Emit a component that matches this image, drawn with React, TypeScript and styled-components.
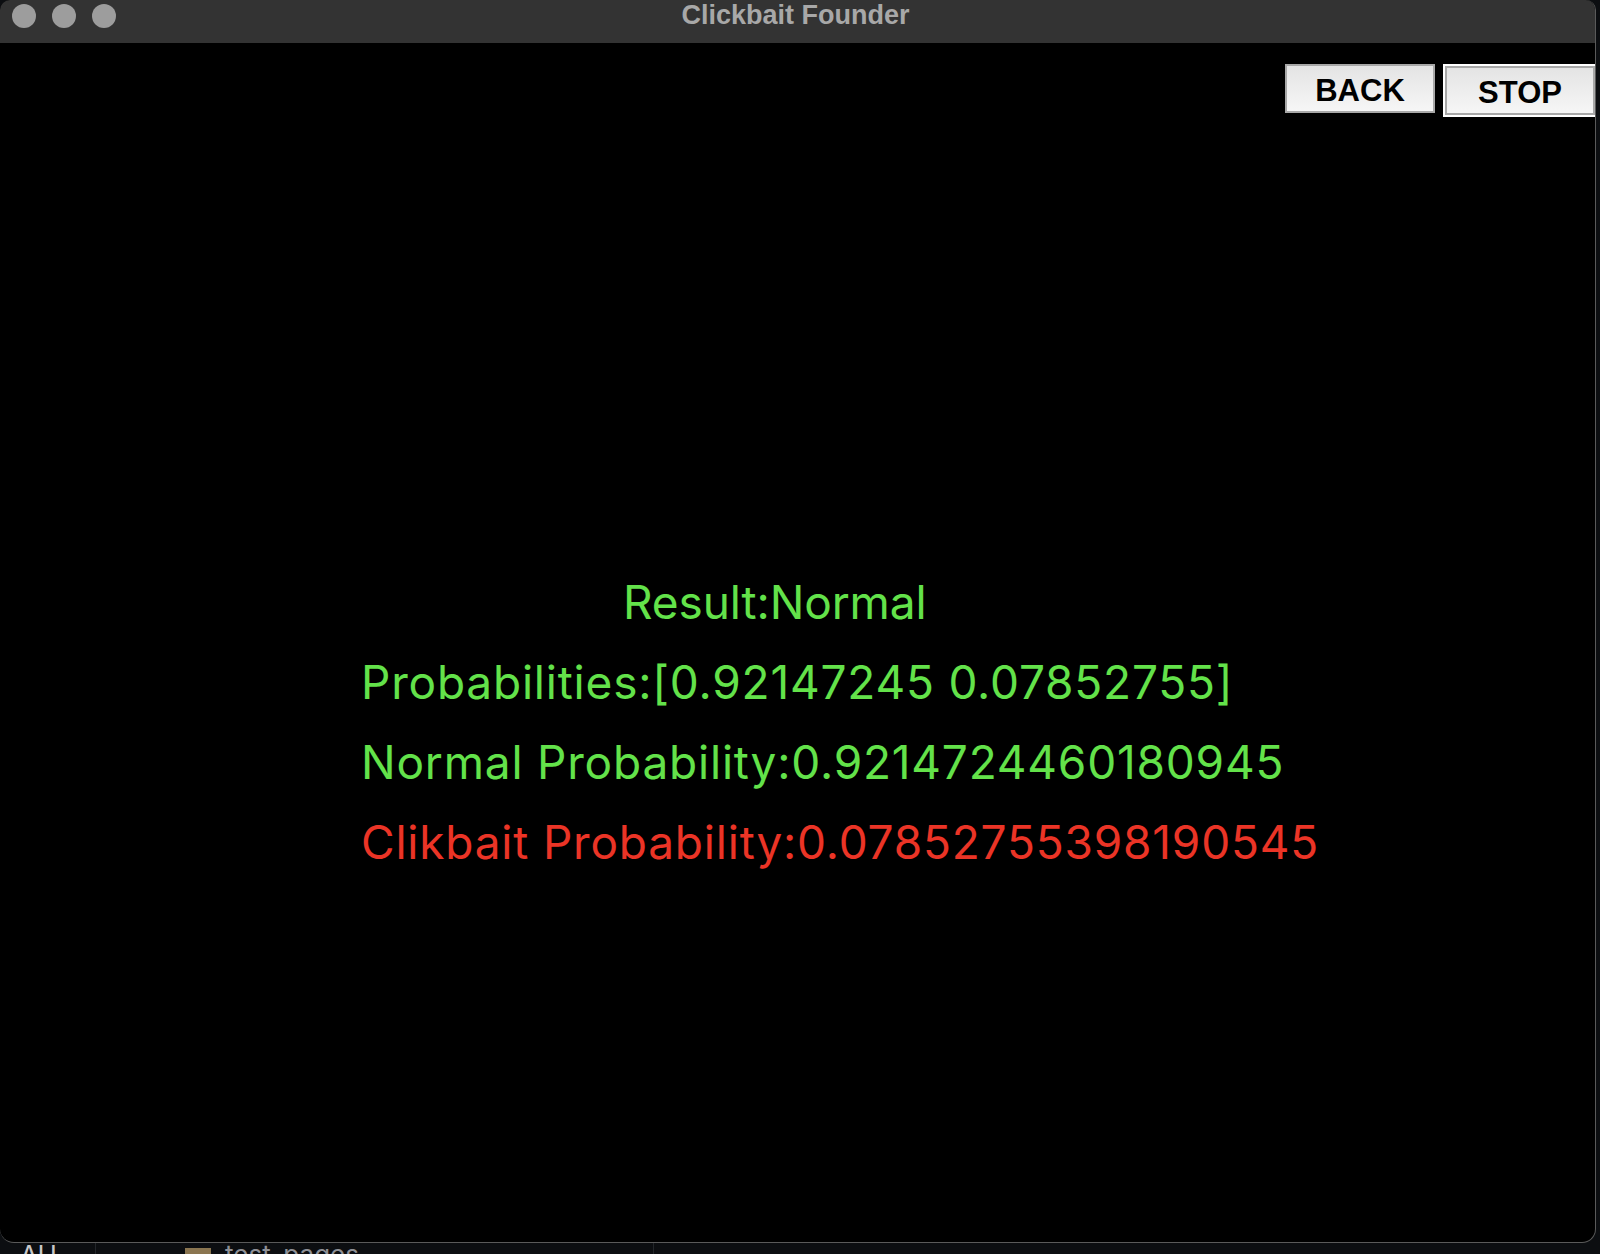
import React from "react";
import styled, { createGlobalStyle } from "styled-components";

const Global = createGlobalStyle`
  html, body { margin: 0; padding: 0; background: #0c0e11; overflow: hidden; }
  #root { width: 1600px; height: 1254px; }
`;

const Screen = styled.div`
  width: 1600px;
  height: 1254px;
  display: flex;
  flex-direction: column;
  overflow: hidden;
  background: #0c0e11;
`;

const Window = styled.div`
  width: 1596px;
  height: 1243px;
  flex: none;
  display: flex;
  flex-direction: column;
  background: #000;
  border-right: 1px solid #5a5a5a;
  border-bottom: 1px solid #5a5a5a;
  border-radius: 10px 10px 14px 14px;
  box-sizing: border-box;
  overflow: hidden;
`;

const TitleBar = styled.div`
  height: 43px;
  flex: none;
  background: #333333;
  display: grid;
  grid-template-columns: 1fr auto 1fr;
  align-items: start;
`;

const Lights = styled.div`
  display: flex;
  gap: 16px;
  padding: 4px 0 0 12px;
`;

const Light = styled.span`
  width: 24px;
  height: 24px;
  border-radius: 50%;
  background: #9d9d9d;
`;

const Title = styled.div`
  font-family: "Liberation Sans", Arial, sans-serif;
  font-weight: 700;
  font-size: 27px;
  line-height: 30px;
  color: #a8a8a8;
  margin-right: 4px;
`;

const Content = styled.div`
  flex: 1;
  display: flex;
  flex-direction: column;
`;

const ButtonRow = styled.div`
  display: flex;
  justify-content: flex-end;
  align-items: flex-start;
  gap: 10px;
  padding-top: 21px;
`;

const Button = styled.button<{ $focused?: boolean }>`
  box-sizing: border-box;
  width: 150px;
  height: 49px;
  margin: ${(p) => (p.$focused ? "2px 0 0 0" : "0")};
  padding: 4px 0 0 0;
  font-family: "Liberation Sans", Arial, sans-serif;
  font-weight: 700;
  font-size: 31px;
  color: #000;
  background: linear-gradient(#e4e4e4, #f6f6f6);
  border: 2px solid #a8a8a8;
  box-shadow: ${(p) => (p.$focused ? "0 0 0 2px #ffffff" : "none")};
  display: flex;
  align-items: center;
  justify-content: center;
  cursor: pointer;
`;

const Results = styled.div`
  margin-top: 447px;
  padding-left: 361px;
  display: flex;
  flex-direction: column;
`;

const Line = styled.div<{ $red?: boolean; $indent?: number; $tight?: boolean }>`
  font-family: Inter, "Noto Sans", sans-serif;
  font-size: 46px;
  line-height: 80px;
  height: 80px;
  letter-spacing: ${(p) => (p.$tight ? "-0.1px" : "0.8px")};
  white-space: nowrap;
  color: ${(p) => (p.$red ? "#eb3426" : "#63e24a")};
  padding-left: ${(p) => p.$indent ?? 0}px;
`;

const Desktop = styled.div`
  flex: 1;
  display: flex;
  align-items: flex-start;
  overflow: hidden;
`;

const DockCell = styled.div<{ $w: number }>`
  width: ${(p) => p.$w}px;
  height: 40px;
  border-right: 1px solid #23262a;
  display: flex;
  align-items: flex-start;
  gap: 14px;
  padding-left: 20px;
  box-sizing: border-box;
`;

const Spacer = styled.span`
  width: 55px;
`;

const Folder = styled.span`
  width: 26px;
  height: 10px;
  margin-top: 5px;
  background: #8a7550;
`;

const Faint = styled.span<{ $light?: boolean }>`
  font-family: Inter, "Noto Sans", sans-serif;
  font-size: 26px;
  line-height: 20px;
  color: ${(p) => (p.$light ? "#c8c8c8" : "#8e9096")};
  margin-top: 2px;
`;

export default function App() {
  return (
    <>
      <Global />
      <Screen>
        <Window>
          <TitleBar>
            <Lights>
              <Light />
              <Light />
              <Light />
            </Lights>
            <Title>Clickbait Founder</Title>
            <div />
          </TitleBar>
          <Content>
            <ButtonRow>
              <Button>BACK</Button>
              <Button $focused>STOP</Button>
            </ButtonRow>
            <Results>
              <Line $indent={262} $tight>Result:Normal</Line>
              <Line>Probabilities:[0.92147245 0.07852755]</Line>
              <Line>Normal Probability:0.9214724460180945</Line>
              <Line $red>Clikbait Probability:0.07852755398190545</Line>
            </Results>
          </Content>
        </Window>
        <Desktop>
          <DockCell $w={96}>
            <Faint $light>AU</Faint>
          </DockCell>
          <DockCell $w={558}>
            <Spacer />
            <Folder />
            <Faint>test_pages</Faint>
          </DockCell>
        </Desktop>
      </Screen>
    </>
  );
}
